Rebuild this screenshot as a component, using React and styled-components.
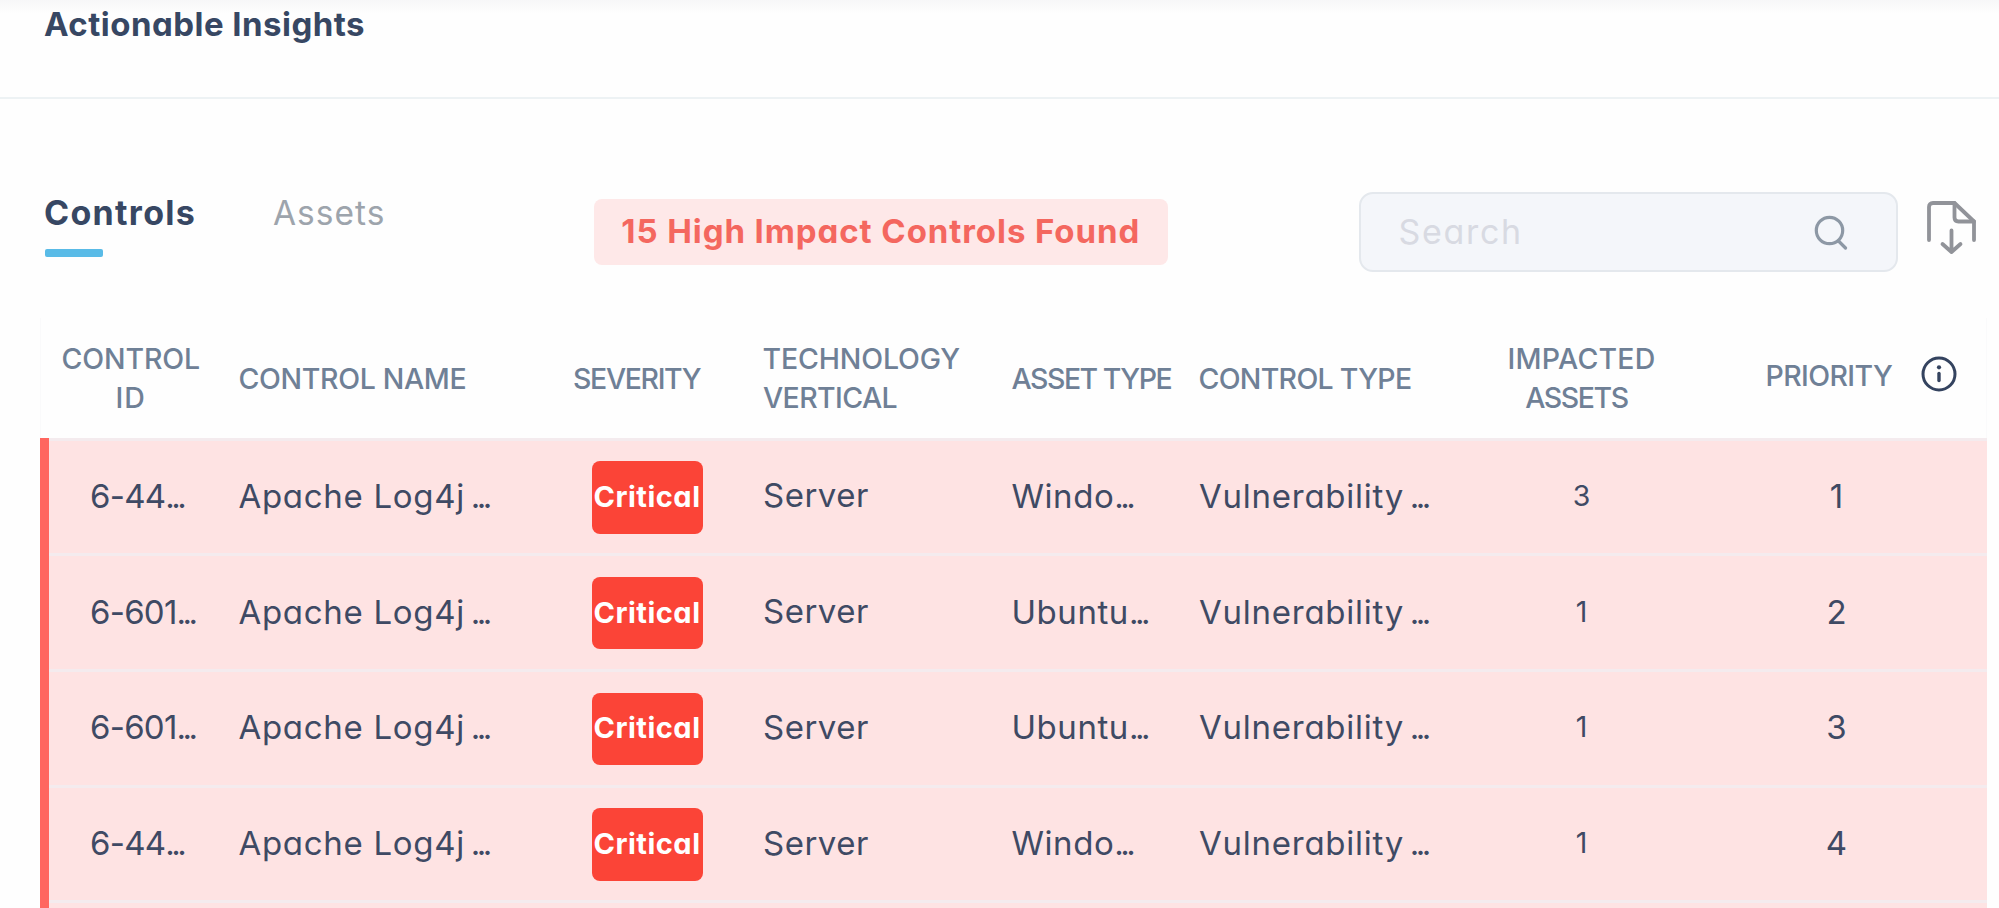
import React from 'react';
import styled, { createGlobalStyle } from 'styled-components';

const GlobalStyle = createGlobalStyle`
  * { box-sizing: border-box; }
  html, body { margin: 0; height: 100%; overflow: hidden; background: #fefefe; }
  body {
    font-family: Inter, 'Liberation Sans', sans-serif;
    font-feature-settings: 'cv11';
    font-size: 33px;
    line-height: 40px;
    color: #3f4a64;
    white-space: nowrap;
  }
`;

const Page = styled.main`
  height: 908px;
  overflow: hidden;
`;

const Header = styled.header`
  height: 99px;
  padding: 4px 0 0 44px;
  border-bottom: 2px solid #edf2f4;
  background: linear-gradient(#f7f7f8, #fefefe 14px);
`;

const Title = styled.h1`
  margin: 0;
  font-size: 33px;
  font-weight: 700;
  line-height: 40px;
  letter-spacing: 0.47px;
  color: #374763;
`;

const Toolbar = styled.div`
  display: flex;
  align-items: flex-start;
  height: 80px;
  margin-top: 93px;
  padding-left: 44px;
`;

const Tabs = styled.nav`
  display: flex;
  width: 549.5px;
  padding-top: 1px;
`;

const Tab = styled.div`
  width: ${(p) => p.$width}px;
  font-size: ${(p) => (p.$active ? 34 : 33.5)}px;
  font-weight: ${(p) => (p.$active ? 700 : 400)};
  letter-spacing: ${(p) => (p.$active ? 1.3 : 1)}px;
  color: ${(p) => (p.$active ? '#374763' : '#9da4ac')};

  &::after {
    content: '';
    display: ${(p) => (p.$active ? 'block' : 'none')};
    width: 57.5px;
    height: 8px;
    margin: 16px 0 0 1px;
    border-radius: 2px;
    background: #59bbe7;
  }
`;

const CountPill = styled.div`
  display: flex;
  align-items: center;
  justify-content: center;
  width: 574.5px;
  height: 66px;
  margin-top: 7px;
  padding-bottom: 2px;
  border-radius: 8px;
  background: #fee8e8;
  font-weight: 700;
  letter-spacing: 0.92px;
  color: #f4675f;
`;

const SearchBox = styled.label`
  display: flex;
  align-items: center;
  justify-content: space-between;
  width: 539px;
  height: 80px;
  margin-left: 190.5px;
  padding: 0 48px 0 38px;
  border: 2px solid #e4e8ed;
  border-radius: 14px;
  background: #f4f6fa;
`;

const SearchInput = styled.input`
  width: 300px;
  height: 40px;
  padding: 0;
  border: 0;
  outline: 0;
  background: none;
  font: inherit;
  font-size: 34px;
  font-feature-settings: inherit;
  letter-spacing: 1.7px;

  &::placeholder { color: #d8dae2; opacity: 1; }
`;

const ExportButton = styled.button`
  margin: 8px 0 0 28px;
  padding: 0;
  border: 0;
  background: none;
  line-height: 0;
`;

const Table = styled.section`
  width: 1947px;
  margin: 46px 0 0 40px;
`;

const gridColumns = '189.5px 334.5px 190px 248.5px 187.5px 290px 184px 1fr';

const HeadRow = styled.div`
  display: grid;
  grid-template-columns: ${gridColumns};
  align-items: center;
  height: 119.6px;
  padding-left: 8px;
  border: 1px solid #fafafb;
  border-width: 0 1px;
  font-size: 28.5px;
  font-weight: 500;
  line-height: 39.5px;
  color: #6f8096;
`;

const HeadCell = styled.div`
  padding-top: 1px;
  padding-right: ${(p) => p.$outdent || 0}px;
  text-align: ${(p) => (p.$center ? 'center' : 'left')};
`;

const HeadWord = styled.span`
  display: ${(p) => (p.$block ? 'block' : 'inline')};
  letter-spacing: ${(p) => p.$track}px;
  margin-left: ${(p) => p.$shift || 0}px;
`;

const PriorityHead = styled.div`
  display: flex;
  align-items: center;
  gap: 29px;
  padding: 0 0 4px 92.5px;

  svg { margin-bottom: 3px; }
`;

const BodyRow = styled.div`
  display: grid;
  grid-template-columns: ${gridColumns};
  align-items: center;
  height: 115.7px;
  border-left: 9px solid #ff665f;
  background: linear-gradient(#f4ebee, #f4ebee) top / 100% 3px no-repeat #fee3e3;
`;

const Cell = styled.div`
  padding: 1px 0 0 ${(p) => p.$indent || 0}px;
  text-align: ${(p) => (p.$center ? 'center' : 'left')};
  font-size: ${(p) => (p.$small ? 28.5 : 33)}px;
  letter-spacing: ${(p) => p.$track || 0}px;
`;

const Dots = styled.span`
  letter-spacing: -3.5px;
`;

const Badge = styled.span`
  display: flex;
  align-items: center;
  justify-content: center;
  width: 111px;
  height: 72.5px;
  margin: 4px 0 0 18.5px;
  padding-bottom: 1px;
  border-radius: 8px;
  background: #fb4437;
  font-size: 29px;
  font-weight: 700;
  letter-spacing: 0.5px;
  color: #fff;
`;

const SearchIcon = () => (
  <svg width="34" height="35" viewBox="0 0 34 35" fill="none" stroke="#8d98a5" strokeWidth="3.2" strokeLinecap="round">
    <circle cx="15.5" cy="15.5" r="13.2" />
    <path d="M24.5 26 L31.5 33" />
  </svg>
);

const ExportIcon = () => (
  <svg width="51" height="56" viewBox="0 0 51 56" fill="none" stroke="#919399" strokeWidth="3.8" strokeLinecap="round" strokeLinejoin="round">
    <path d="M3 40 V7 Q3 3 7 3 H28.5 L48 21.5 V40" />
    <path d="M28.5 3 V17.5 Q28.5 21.5 32.5 21.5 H48" />
    <path d="M25.5 30.5 V52 M16.5 44 L25.5 52 L34.5 44" />
  </svg>
);

const InfoIcon = () => (
  <svg width="36" height="36" viewBox="0 0 36 36" fill="none" stroke="#34435f" strokeWidth="3">
    <circle cx="18" cy="18" r="16" />
    <path d="M18 17.5 V24.5" strokeWidth="3.4" strokeLinecap="round" />
    <circle cx="18" cy="11.3" r="2.1" fill="#34435f" stroke="none" />
  </svg>
);

const Truncated = ({ text, spaced }) => (
  <>
    {text}
    <Dots>{spaced ? ' ...' : '...'}</Dots>
  </>
);

const rows = [
  { id: '6-44', asset: 'Windo', impacted: 3, priority: 1 },
  { id: '6-601', asset: 'Ubuntu', impacted: 1, priority: 2 },
  { id: '6-601', asset: 'Ubuntu', impacted: 1, priority: 3 },
  { id: '6-44', asset: 'Windo', impacted: 1, priority: 4 },
];

export default function App() {
  return (
    <Page>
      <GlobalStyle />
      <Header>
        <Title>Actionable Insights</Title>
      </Header>
      <Toolbar>
        <Tabs>
          <Tab $active $width={229}>Controls</Tab>
          <Tab>Assets</Tab>
        </Tabs>
        <CountPill>15 High Impact Controls Found</CountPill>
        <SearchBox>
          <SearchInput placeholder="Search" />
          <SearchIcon />
        </SearchBox>
        <ExportButton aria-label="Export">
          <ExportIcon />
        </ExportButton>
      </Toolbar>
      <Table>
        <HeadRow>
          <HeadCell $center $outdent={26}>
            <HeadWord $block $track={-0.15}>CONTROL</HeadWord>
            <HeadWord $block $track={1}>ID</HeadWord>
          </HeadCell>
          <HeadCell>
            <HeadWord $track={-0.34}>CONTROL NAME</HeadWord>
          </HeadCell>
          <HeadCell>
            <HeadWord $track={-1.35}>SEVERITY</HeadWord>
          </HeadCell>
          <HeadCell>
            <HeadWord $block $track={-0.15} $shift={-0.5}>TECHNOLOGY</HeadWord>
            <HeadWord $block $track={-0.6}>VERTICAL</HeadWord>
          </HeadCell>
          <HeadCell>
            <HeadWord $track={-1.5}>ASSET TYPE</HeadWord>
          </HeadCell>
          <HeadCell>
            <HeadWord $track={-0.7} $shift={-0.5}>CONTROL TYPE</HeadWord>
          </HeadCell>
          <HeadCell $center>
            <HeadWord $block $track={0.2} $shift={1}>IMPACTED</HeadWord>
            <HeadWord $block $track={-1.4} $shift={-9}>ASSETS</HeadWord>
          </HeadCell>
          <PriorityHead>
            <HeadWord $track={-0.6}>PRIORITY</HeadWord>
            <InfoIcon />
          </PriorityHead>
        </HeadRow>
        {rows.map((row) => (
          <BodyRow key={row.priority}>
            <Cell $indent={41} $track={-0.75}>
              <Truncated text={row.id} />
            </Cell>
            <Cell $track={0.7}>
              <Truncated text="Apache Log4j" spaced />
            </Cell>
            <Badge>Critical</Badge>
            <Cell $indent={-1} $track={0.5}>Server</Cell>
            <Cell $track={0.55}>
              <Truncated text={row.asset} />
            </Cell>
            <Cell $track={0.75}>
              <Truncated text="Vulnerability" spaced />
            </Cell>
            <Cell $center $small $indent={1}>{row.impacted}</Cell>
            <Cell $center $indent={13}>{row.priority}</Cell>
          </BodyRow>
        ))}
        <BodyRow />
      </Table>
    </Page>
  );
}
